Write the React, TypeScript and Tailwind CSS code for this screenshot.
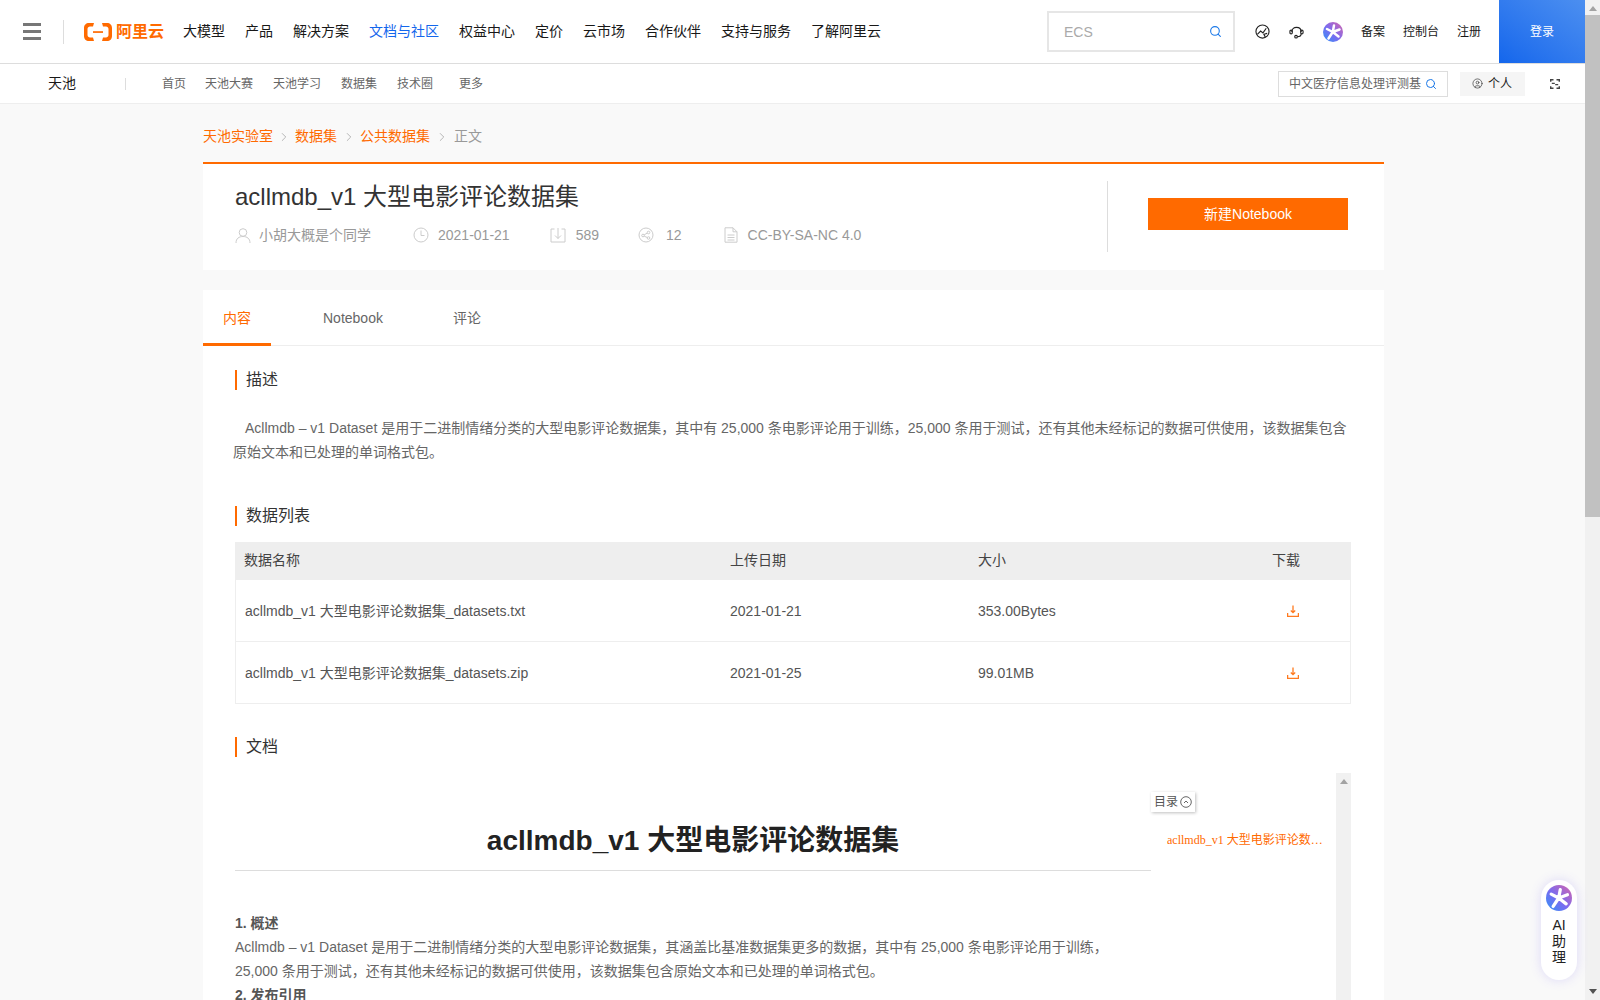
import { ChevronRight, CircleUser, Search } from "lucide-react";

const MAIN_NAV = ["大模型", "产品", "解决方案", "文档与社区", "权益中心", "定价", "云市场", "合作伙伴", "支持与服务", "了解阿里云"];
const SUB_NAV = [
  { label: "首页", className: "ml-[36px]" },
  { label: "天池大赛", className: "ml-[19px]" },
  { label: "天池学习", className: "ml-[20px]" },
  { label: "数据集", className: "ml-[20px]" },
  { label: "技术圈", className: "ml-[20px]" },
  { label: "更多", className: "ml-[26px]" },
];
const FILES = [
  { name: "acllmdb_v1 大型电影评论数据集_datasets.txt", date: "2021-01-21", size: "353.00Bytes" },
  { name: "acllmdb_v1 大型电影评论数据集_datasets.zip", date: "2021-01-25", size: "99.01MB" },
];

function AiStar({ className }: { className: string }) {
  return (
    <svg viewBox="0 0 40 40" className={className}>
      <defs>
        <linearGradient id="ai-star" x1="0.9" y1="0.1" x2="0.1" y2="0.9">
          <stop offset="0" stopColor="#c566b8" />
          <stop offset="0.55" stopColor="#7a6cf0" />
          <stop offset="1" stopColor="#3f8bf5" />
        </linearGradient>
      </defs>
      <circle cx="20" cy="20" r="20" fill="url(#ai-star)" />
      <path
        d="M22 7 19.5 20M19.5 20 8 14M19.5 20 11 33M19.5 20 31 29M19.5 20 33 15"
        fill="none"
        stroke="#fff"
        strokeWidth="5"
        strokeLinecap="round"
      />
    </svg>
  );
}

function SectionTitle({ children, className }: { children: string; className: string }) {
  return (
    <h2 className={`h-[20px] border-l-2 border-[#ff6a00] pl-[9px] text-[16px] leading-[20px] text-[#333] ${className}`}>
      {children}
    </h2>
  );
}

function DownloadIcon() {
  return (
    <svg viewBox="0 0 12 12" className="size-[12px]" fill="none" stroke="#ff7a1f" strokeWidth="1.3">
      <path d="M6 0.5V7.5M3.8 5.5 6 7.7 8.2 5.5M0.6 8V11.3H11.4V8" />
    </svg>
  );
}

function TriangleUp({ className }: { className: string }) {
  return (
    <svg viewBox="0 0 8 5" className={`h-[5px] w-[8px] ${className}`}>
      <path d="M4 0 8 5H0Z" fill="#a3a3a3" />
    </svg>
  );
}

function TopHeader() {
  return (
    <header className="flex h-[64px] items-center border-b border-[#ddd] bg-white pl-[23px]">
      <div className="flex w-[18px] flex-col gap-[4.5px]">
        <span className="h-[2.5px] bg-[#777]" />
        <span className="h-[2.5px] bg-[#777]" />
        <span className="h-[2.5px] bg-[#777]" />
      </div>
      <span className="ml-[22px] h-[24px] w-px bg-[#ddd]" />
      <div className="ml-[20px] flex w-[79px] shrink-0 items-center gap-[4px] whitespace-nowrap text-[#ff6a00]">
        <svg viewBox="0 0 28 18" className="h-[18px] w-[28px] shrink-0" fill="#ff6a00">
          <path d="M10 0H5C2 0 0 2 0 5V13C0 16 2 18 5 18H10L9 14.5H6C4.7 14.5 3.5 13.5 3.5 12V6C3.5 4.5 4.7 3.5 6 3.5H9Z" />
          <path d="M18 0H23C26 0 28 2 28 5V13C28 16 26 18 23 18H18L19 14.5H22C23.3 14.5 24.5 13.5 24.5 12V6C24.5 4.5 23.3 3.5 22 3.5H19Z" />
          <rect x="9" y="8.2" width="10" height="1.7" />
        </svg>
        <span className="text-[16px] font-bold leading-none">阿里云</span>
      </div>
      <nav className="ml-[20px] flex gap-[20px] text-[14px] text-[#181818]">
        {MAIN_NAV.map((item) => (
          <a key={item} className={item === "文档与社区" ? "text-[#1366ec]" : ""}>
            {item}
          </a>
        ))}
      </nav>
      <div className="ml-auto flex h-[41px] w-[188px] items-center justify-between border-2 border-[#e6e6e6] pl-[15px] pr-[11px] text-[14px] text-[#aaa]">
        <span className="pt-[2px]">ECS</span>
        <Search className="size-[13px] text-[#1a78e8]" />
      </div>
      <svg viewBox="0 0 16 16" className="ml-[20px] size-[15px]" fill="none" stroke="#222" strokeWidth="1.2">
        <circle cx="8" cy="8" r="7" />
        <path d="M2.5 11 6 7.5 8.5 9.5 12 4.5M11 14 9.5 11 13 10" />
      </svg>
      <svg viewBox="0 0 16 16" className="ml-[19px] size-[15px]" fill="none" stroke="#222" strokeWidth="1.2">
        <path d="M3 8.5C3 2 13 2 13 8.5M13 10C13 12.5 11 13.5 9 13.5" />
        <rect x="1" y="6.5" width="2.5" height="4" rx="1.2" />
        <rect x="12.5" y="6.5" width="2.5" height="4" rx="1.2" />
        <circle cx="7.5" cy="13.5" r="1.4" />
      </svg>
      <AiStar className="ml-[19px] size-[20px]" />
      <div className="ml-[18px] flex gap-[18px] text-[12px] text-[#181818]">
        <a>备案</a>
        <a>控制台</a>
        <a>注册</a>
      </div>
      <button className="ml-[18px] h-[63px] w-[86px] bg-gradient-to-tr from-[#1366ec] to-[#4c8ff0] text-[12px] text-white">
        登录
      </button>
    </header>
  );
}

function SubHeader() {
  return (
    <div className="flex h-[40px] items-center border-b border-[#eee] bg-white pl-[48px]">
      <span className="text-[14px] text-[#181818]">天池</span>
      <span className="ml-[49px] h-[12px] w-px bg-[#ddd]" />
      <nav className="flex text-[12px] text-[#666]">
        {SUB_NAV.map((item) => (
          <a key={item.label} className={item.className}>
            {item.label}
          </a>
        ))}
      </nav>
      <div className="ml-auto flex h-[26px] w-[170px] items-center justify-between border border-[#ddd] pl-[10px] pr-[10px] text-[12px] text-[#666]">
        <span className="w-[132px] overflow-hidden whitespace-nowrap">中文医疗信息处理评测基</span>
        <Search className="size-[12px] shrink-0 text-[#1a78e8]" />
      </div>
      <div className="ml-[12px] flex h-[24px] w-[65px] items-center gap-[5px] bg-[#f5f5f5] pl-[12px] text-[12px] text-[#222]">
        <CircleUser className="size-[11px] text-[#444]" strokeWidth={1.6} />
        个人
      </div>
      <svg viewBox="0 0 10 10" className="ml-[25px] mr-[25px] size-[10px]" fill="none" stroke="#444" strokeWidth="1.4">
        <path d="M0.7 2.8V0.7H3.5M6.5 0.7H9.3V2.8M0.7 7.2V9.3H3.5M6.5 9.3H9.3V7.2M1.8 4.4H4.8M5.2 5.6H8.2" />
      </svg>
    </div>
  );
}

function DatasetHead() {
  const iconClass = "size-[16px] shrink-0";
  return (
    <section className="flex h-[108px] border-t-2 border-[#ff6a00] bg-white">
      <div className="flex-1 pl-[32px] pt-[17px]">
        <h1 className="text-[24px] leading-[32px] text-[#333]">acllmdb_v1 大型电影评论数据集</h1>
        <div className="mt-[12px] flex h-[20px] items-center text-[14px] text-[#999]">
          <svg viewBox="0 0 16 16" className={iconClass} fill="none" stroke="#ccc" strokeWidth="1">
            <circle cx="8" cy="5.5" r="3.8" />
            <path d="M1 16C1 11.5 4 9.5 8 9.5S15 11.5 15 16" />
          </svg>
          <span className="ml-[8px]">小胡大概是个同学</span>
          <svg viewBox="0 0 16 16" className={`ml-[42px] ${iconClass}`} fill="none" stroke="#ccc" strokeWidth="1">
            <circle cx="8" cy="8" r="7" />
            <path d="M8 3.5V8.5H11.5" />
          </svg>
          <span className="ml-[9px]">2021-01-21</span>
          <svg viewBox="0 0 16 16" className={`ml-[40px] ${iconClass}`} fill="none" stroke="#ccc" strokeWidth="1">
            <path d="M4.5 2H1V15H15V2H11.5M8 1V11.5M5 8.5 8 11.5 11 8.5" />
          </svg>
          <span className="ml-[10px]">589</span>
          <svg viewBox="0 0 16 16" className={`ml-[39px] ${iconClass}`} fill="none" stroke="#ccc" strokeWidth="1">
            <circle cx="8" cy="8" r="7" />
            <circle cx="5" cy="8.5" r="1.3" />
            <circle cx="10.5" cy="5.5" r="1.3" />
            <circle cx="10.5" cy="11" r="1.3" />
            <path d="M6.2 7.8 9.3 6.1M6.2 9.2 9.3 10.5" />
          </svg>
          <span className="ml-[12px]">12</span>
          <svg viewBox="0 0 16 16" className={`ml-[41px] ${iconClass}`} fill="none" stroke="#ccc" strokeWidth="1">
            <path d="M2 0.8H10L14 4.8V15.2H2ZM10 0.8V4.8H14M4.5 8H11.5M4.5 10.5H11.5M4.5 13H11.5" />
          </svg>
          <span className="ml-[9px]">CC-BY-SA-NC 4.0</span>
        </div>
      </div>
      <div className="mt-[17px] h-[71px] w-[277px] border-l border-[#ddd] pl-[40px] pt-[17px]">
        <button className="h-[32px] w-[200px] bg-[#ff6a00] text-[14px] text-white">新建Notebook</button>
      </div>
    </section>
  );
}

function FileTable() {
  const cols = "grid grid-cols-[495px_248px_295px_1fr] items-center";
  return (
    <div className="mt-[16px] w-[1116px] text-[14px] text-[#555]">
      <div className={`${cols} h-[38px] bg-[#eee] pb-[1px] pl-[9px] text-[#444]`}>
        <span>数据名称</span>
        <span className="-ml-[9px]">上传日期</span>
        <span className="-ml-[9px]">大小</span>
        <span className="-ml-[10px]">下载</span>
      </div>
      {FILES.map((file) => (
        <div key={file.name} className={`${cols} h-[62px] border-x border-b border-[#eee] pl-[9px] pt-[1px]`}>
          <span className="whitespace-nowrap">{file.name}</span>
          <span className="-ml-[10px]">{file.date}</span>
          <span className="-ml-[10px]">{file.size}</span>
          <span className="ml-[4px]">
            <DownloadIcon />
          </span>
        </div>
      ))}
    </div>
  );
}

function DocPreview() {
  return (
    <div className="mt-[16px] flex w-[1116px]">
      <article className="w-[916px] text-[14px] leading-[24px] text-[#666]">
        <h1 className="mt-[48px] border-b border-[#ddd] pb-[9px] text-center text-[28px] font-bold leading-[40px] text-[#222]">
          acllmdb_v1 大型电影评论数据集
        </h1>
        <h3 className="mt-[40px] font-bold text-[#555]">1. 概述</h3>
        <p className="whitespace-nowrap">
          Acllmdb – v1 Dataset 是用于二进制情绪分类的大型电影评论数据集，其涵盖比基准数据集更多的数据，其中有 25,000 条电影评论用于训练，
          <br />
          25,000 条用于测试，还有其他未经标记的数据可供使用，该数据集包含原始文本和已处理的单词格式包。
        </p>
        <h3 className="font-bold text-[#555]">2. 发布引用</h3>
      </article>
      <aside className="w-[185px]">
        <div className="mt-[19px] flex h-[20px] w-[44px] items-center gap-[2px] pl-[3px] text-[12px] text-[#555] shadow-[1px_1px_3px_rgba(0,0,0,0.25)]">
          目录
          <svg viewBox="0 0 12 12" className="size-[12px]" fill="none" stroke="#666" strokeWidth="1">
            <circle cx="6" cy="6" r="5.3" />
            <path d="M4 7 6 5 8 7" />
          </svg>
        </div>
        <p className="ml-[16px] mt-[18px] w-[167px] truncate font-['Liberation_Serif','Noto_Sans_CJK_SC',serif] text-[12px] leading-[20px] text-[#ff6a00]">
          acllmdb_v1 大型电影评论数据集
        </p>
      </aside>
      <div className="flex h-[300px] w-[15px] flex-col items-center bg-[#f1f1f1] pt-[6px]">
        <TriangleUp className="" />
      </div>
    </div>
  );
}

export default function App() {
  return (
    <div className="flex h-[1000px] w-[1600px] overflow-hidden bg-[#f9f9f9] font-['Liberation_Sans','Noto_Sans_CJK_SC',sans-serif]">
      <div className="w-[1585px] shrink-0">
        <TopHeader />
        <SubHeader />
        <main className="ml-[203px] w-[1181px]">
          <div className="flex h-[58px] items-start pt-[22px] text-[14px] leading-[20px] text-[#ff6a00]">
            <a>天池实验室</a>
            <ChevronRight className="mx-[4px] mt-[4px] size-[14px] text-[#999]" strokeWidth={1.2} />
            <a>数据集</a>
            <ChevronRight className="ml-[5px] mr-[4px] mt-[4px] size-[14px] text-[#999]" strokeWidth={1.2} />
            <a>公共数据集</a>
            <ChevronRight className="mx-[5px] mt-[4px] size-[14px] text-[#999]" strokeWidth={1.2} />
            <span className="text-[#999]">正文</span>
          </div>
          <DatasetHead />
          <section className="mt-[20px] bg-white">
            <div className="flex h-[56px] border-b border-[#eee] text-[14px] text-[#666]">
              <a className="flex h-[56px] w-[68px] items-center justify-center border-b-[3px] border-[#ff6a00] pt-[3px] text-[#ff6a00]">内容</a>
              <a className="ml-[32px] flex h-[55px] items-center px-[20px] pt-[1px]">Notebook</a>
              <a className="ml-[30px] flex h-[55px] items-center px-[20px] pt-[1px]">评论</a>
            </div>
            <div className="pl-[32px]">
              <SectionTitle className="mt-[24px]">描述</SectionTitle>
              <p className="-ml-[2px] mt-[26px] w-[1120px] indent-[12px] text-[14px] leading-[24px] text-[#666]">
                Acllmdb – v1 Dataset 是用于二进制情绪分类的大型电影评论数据集，其中有 25,000 条电影评论用于训练，25,000 条用于测试，还有其他未经标记的数据可供使用，该数据集包含原始文本和已处理的单词格式包。
              </p>
              <SectionTitle className="mt-[42px]">数据列表</SectionTitle>
              <FileTable />
              <SectionTitle className="mt-[33px]">文档</SectionTitle>
              <DocPreview />
            </div>
          </section>
        </main>
      </div>
      <div className="relative flex h-[1000px] w-[15px] shrink-0 flex-col items-center bg-[#f1f1f1]">
        <TriangleUp className="mt-[6px]" />
        <div className="mt-[4px] h-[502px] w-full bg-[#c1c1c1]" />
        <TriangleUp className="absolute bottom-[6px] rotate-180 brightness-50" />
      </div>
      <div className="absolute left-[1541px] top-[880px] flex h-[100px] w-[36px] flex-col items-center rounded-full bg-white pt-[5px] text-[14px] leading-[16px] text-[#222] shadow-[0_0_12px_rgba(110,90,240,0.2)]">
        <AiStar className="size-[26px] shrink-0" />
        <span className="mt-[6px]">AI</span>
        <span>助</span>
        <span>理</span>
      </div>
    </div>
  );
}
